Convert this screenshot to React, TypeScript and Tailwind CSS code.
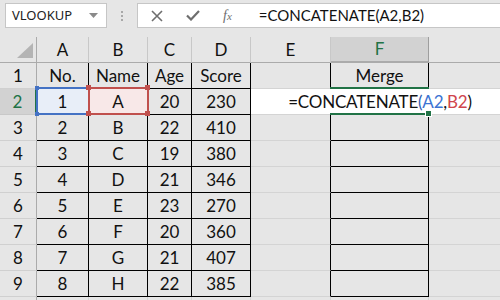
import React from "react";

const COLS = ["A", "B", "C", "D", "E", "F", ""];
const DATA: string[][] = [
  ["No.", "Name", "Age", "Score"],
  ["1", "A", "20", "230"],
  ["2", "B", "22", "410"],
  ["3", "C", "19", "380"],
  ["4", "D", "21", "346"],
  ["5", "E", "23", "270"],
  ["6", "F", "20", "360"],
  ["7", "G", "21", "407"],
  ["8", "H", "22", "385"],
];

const cellFont = { fontFamily: "Lato, 'Liberation Sans', sans-serif" };

function Cell({
  children,
  className,
}: {
  children?: React.ReactNode;
  className: string;
}) {
  return (
    <div
      className={
        "h-[26px] box-border flex items-center justify-center text-[17px] text-[#111] " +
        className
      }
    >
      {children}
    </div>
  );
}

export default function App() {
  const rows: React.ReactNode[] = [];
  for (let r = 1; r <= 10; r++) {
    const inTable = r <= 9;
    const isRow2 = r === 2;
    rows.push(
      <Cell
        key={"h" + r}
        className={
          "border-r border-b " +
          (isRow2
            ? "bg-[#d2d2d2] text-[#217346] border-r-[#217346] border-r-2 border-b-[#c8c8c8]"
            : "bg-[#e6e6e6] border-r-[#ababab] border-b-[#d0d0d0]")
        }
      >
        {inTable ? r : ""}
      </Cell>
    );
    for (let c = 0; c < 4; c++) {
      const txt = inTable ? DATA[r - 1][c] : "";
      let extra = "";
      if (r === 2 && c === 0) extra = " bg-[#e8eef8]";
      if (r === 2 && c === 1) extra = " bg-[#f8e8e8]";
      rows.push(
        <Cell
          key={r + "-" + c}
          className={
            "border-r border-b " +
            (inTable ? "border-r-black border-b-black" : "border-r-[#d4d4d4] border-b-[#d4d4d4]") +
            extra
          }
        >
          {txt}
        </Cell>
      );
    }
    if (isRow2) {
      rows.push(
        <Cell
          key="span2"
          className="col-span-3 bg-white border-b border-b-[#d4d4d4] pl-[8px]"
        >
          <span className="text-[17px] tracking-[-0.2px]">
            =CONCATENATE<span className="text-[#2f5fb3]">(</span>
            <span className="text-[#3b73d3]">A2</span>,
            <span className="text-[#d0454c]">B2</span>)
          </span>
        </Cell>
      );
    } else {
      rows.push(
        <Cell
          key={r + "-E"}
          className={
            "border-r border-b border-b-[#d4d4d4] " +
            (inTable ? "border-r-black" : "border-r-[#d4d4d4]")
          }
        />
      );
      rows.push(
        <Cell
          key={r + "-F"}
          className={
            "border-r border-b " +
            (inTable ? "border-r-black border-b-black" : "border-r-[#d4d4d4] border-b-[#d4d4d4]")
          }
        >
          {r === 1 ? "Merge" : ""}
        </Cell>
      );
      rows.push(
        <Cell key={r + "-G"} className="border-r border-b border-r-[#d4d4d4] border-b-[#d4d4d4]" />
      );
    }
  }

  return (
    <div className="w-[500px] h-[300px] overflow-hidden bg-[#e6e6e6] relative" style={cellFont}>
      {/* toolbar */}
      <div className="h-[37px] flex items-start pt-[3px]">
        <div
          className="ml-[5px] w-[102px] h-[25px] bg-white border border-[#c6c6c6] flex items-center pl-[6px] pr-[6px] box-border"
          style={{ fontFamily: "'Noto Sans', sans-serif" }}
        >
          <span className="text-[13px] text-[#222] flex-1">VLOOKUP</span>
          <svg width="9" height="5" viewBox="0 0 9 5" className="mr-[2px]">
            <polygon points="0,0 9,0 4.5,5" fill="#8a8a8a" />
          </svg>
        </div>
        <div className="w-[30px] h-[25px] flex flex-col items-center justify-center gap-[2px]">
          <div className="w-[2px] h-[2px] bg-[#a8a8a8]" />
          <div className="w-[2px] h-[2px] bg-[#a8a8a8]" />
          <div className="w-[2px] h-[2px] bg-[#a8a8a8]" />
        </div>
        <div className="flex-1 h-[25px] bg-white border border-[#c6c6c6] border-r-0 flex items-center box-border">
          <svg width="12" height="12" viewBox="0 0 12 12" className="ml-[13px]">
            <path d="M1 1 L11 11 M11 1 L1 11" stroke="#6e6e6e" strokeWidth="1.6" />
          </svg>
          <svg width="14" height="11" viewBox="0 0 14 11" className="ml-[23px]">
            <path d="M1 5.5 L5 9.5 L13 1" stroke="#6e6e6e" strokeWidth="2.2" fill="none" />
          </svg>
          <span
            className="ml-[23px] text-[14px] text-[#6e6e6e] italic"
            style={{ fontFamily: "'Liberation Serif', serif" }}
          >
            f<span className="text-[11px]">x</span>
          </span>
          <span className="ml-[27px] text-[15px] text-[#111]">=CONCATENATE(A2,B2)</span>
        </div>
      </div>

      {/* sheet */}
      <div className="relative">
        <div className="grid grid-cols-[37px_52px_59px_44px_59px_80px_98px_72px]">
          {/* header row */}
          <div className="h-[26px] box-border bg-[#e6e6e6] border-r border-b border-r-[#ababab] border-b-[#ababab] relative">
            <svg width="17" height="16" viewBox="0 0 17 16" className="absolute left-[17px] top-[6px]">
              <polygon points="16,0 16,15 0,15" fill="#b4b4b4" />
            </svg>
          </div>
          {COLS.map((c, i) => (
            <Cell
              key={"col" + i}
              className={
                "border-r border-b border-b-[#ababab] " +
                (c === "F"
                  ? "bg-[#d2d2d2] border-r-[#9e9e9e] border-b-2 border-b-[#217346] text-[#217346]"
                  : "bg-[#e6e6e6] border-r-[#c8c8c8]")
              }
            >
              {c}
            </Cell>
          ))}
          {rows}
        </div>

        {/* A2 highlight */}
        <div className="absolute left-[36px] top-[50px] w-[54px] h-[28px] border-2 border-[#4472c4]" />
        <div className="absolute left-[35px] top-[49px] w-[4px] h-[4px] bg-[#4472c4]" />
        <div className="absolute left-[35px] top-[75px] w-[4px] h-[4px] bg-[#4472c4]" />
        {/* B2 highlight */}
        <div className="absolute left-[88px] top-[50px] w-[61px] h-[28px] border-2 border-[#c0504d]" />
        <div className="absolute left-[86px] top-[48px] w-[5px] h-[5px] bg-[#c0504d]" />
        <div className="absolute left-[145px] top-[48px] w-[5px] h-[5px] bg-[#c0504d]" />
        <div className="absolute left-[86px] top-[74px] w-[5px] h-[5px] bg-[#c0504d]" />
        <div className="absolute left-[145px] top-[74px] w-[5px] h-[5px] bg-[#c0504d]" />
        {/* F2 active cell */}
        <div className="absolute left-[330px] top-[50px] w-[99px] h-[2px] bg-[#217346]" />
        <div className="absolute left-[330px] top-[76px] w-[96px] h-[2px] bg-[#217346]" />
        <div className="absolute left-[426px] top-[74px] w-[5px] h-[5px] bg-[#217346] outline outline-1 outline-white" />
      </div>
    </div>
  );
}
